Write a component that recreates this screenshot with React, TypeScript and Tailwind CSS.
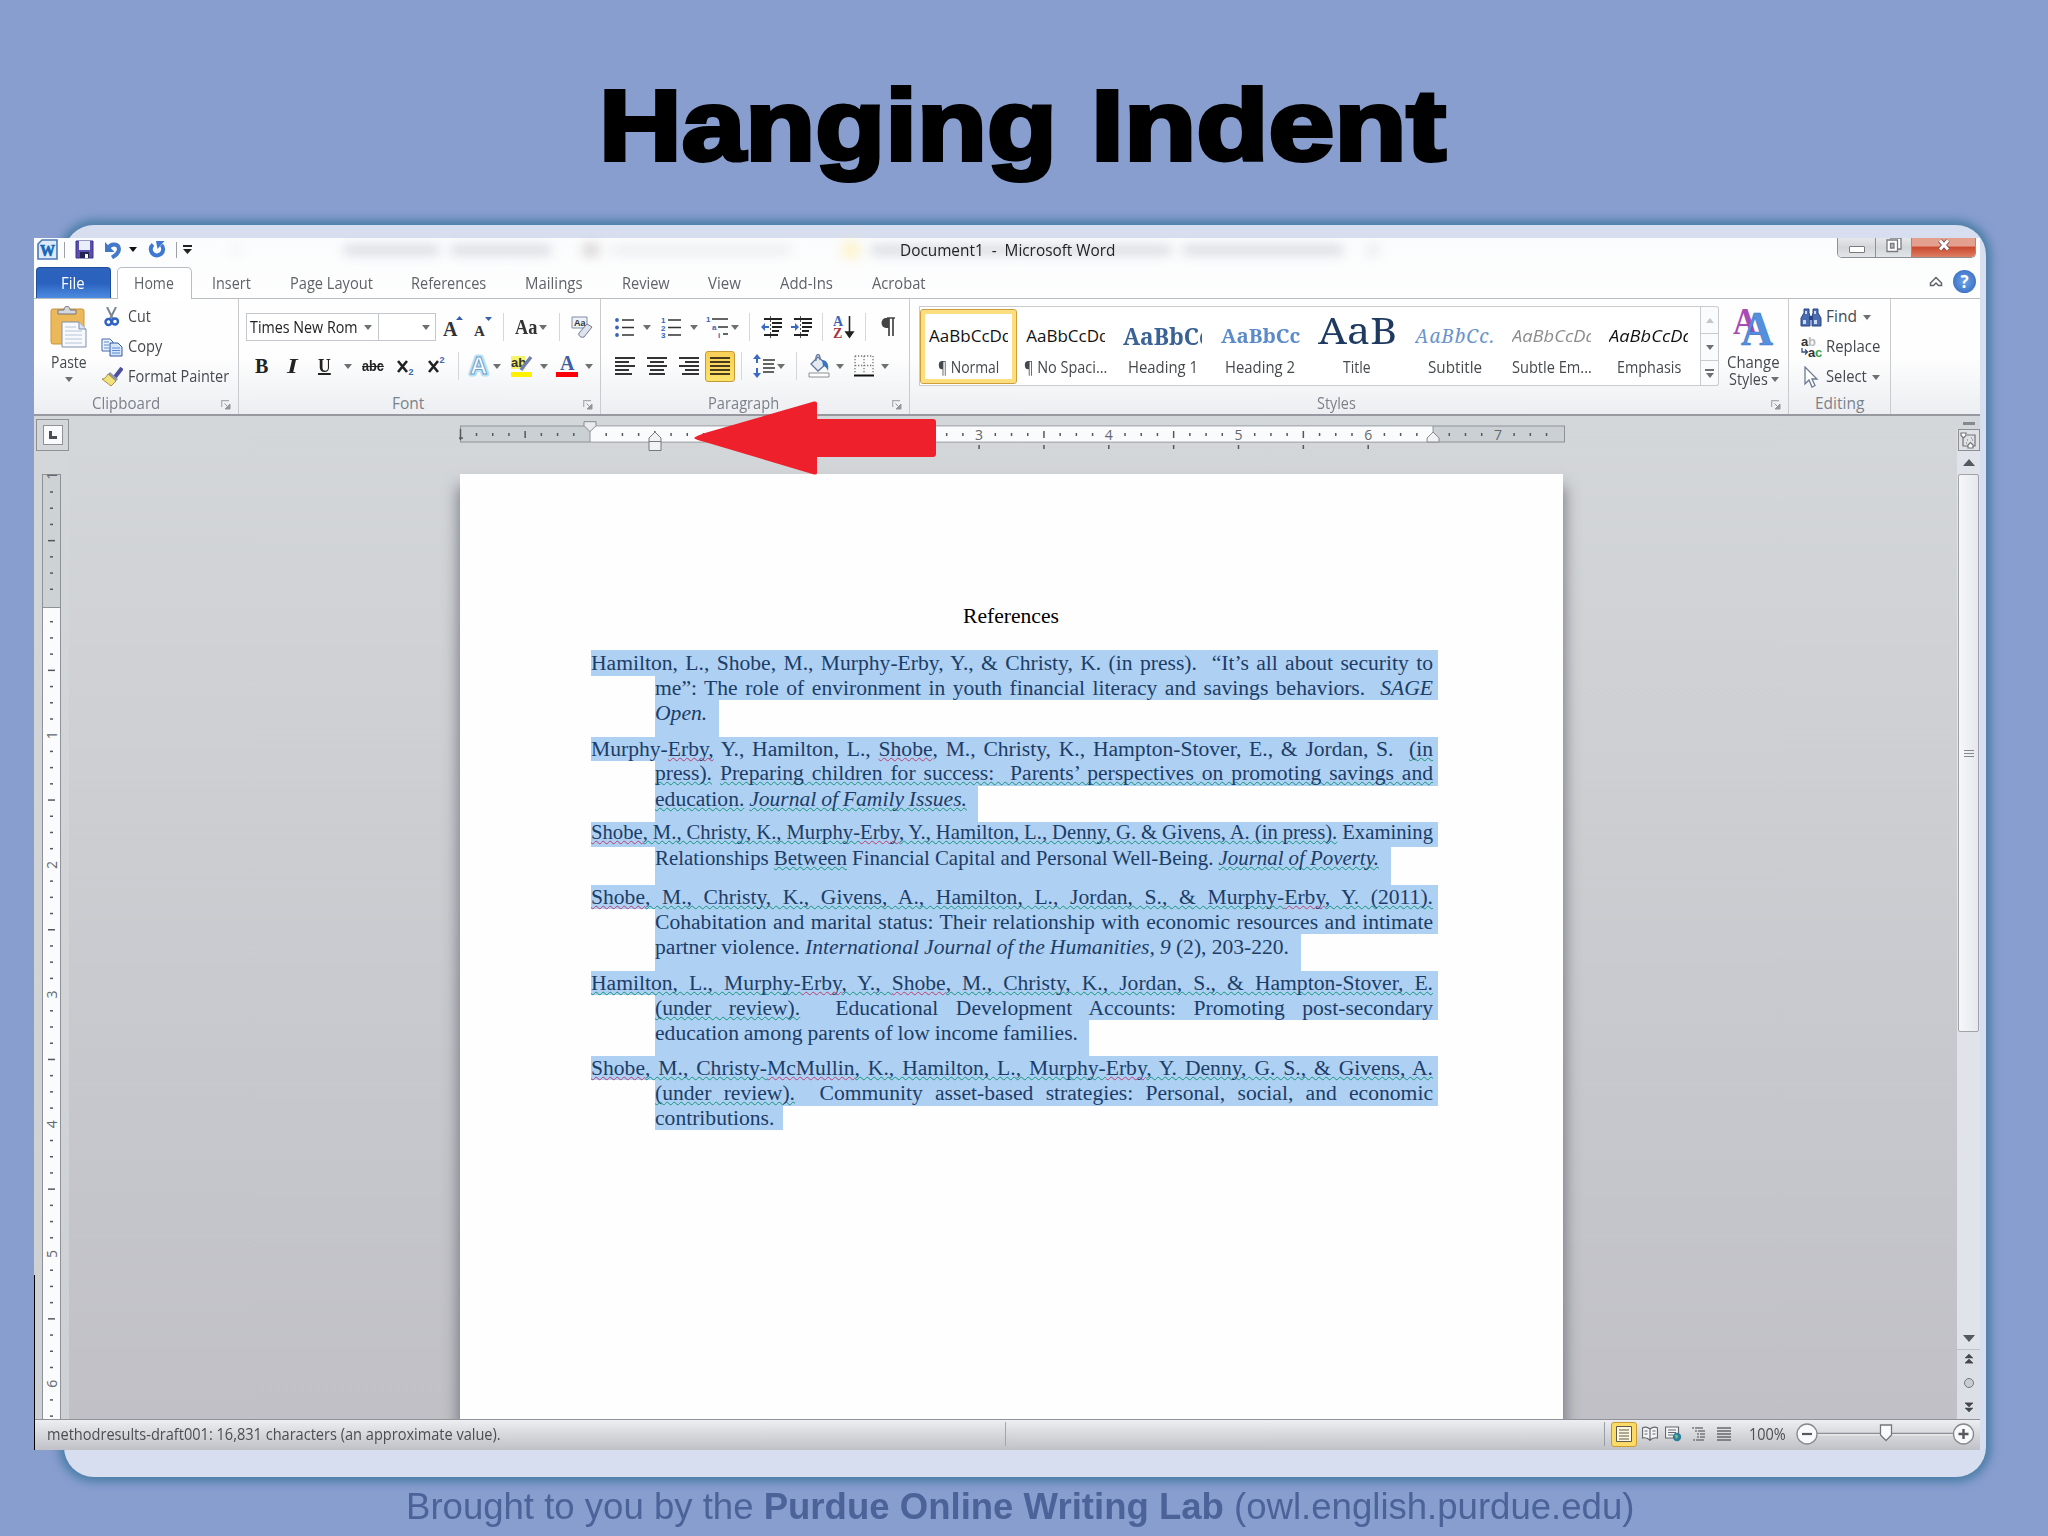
import { useLayoutEffect, useRef, type ReactNode } from "react";
import clsx from "clsx";

/* Squeezes or stretches one line of text to a given width */
function Fit({ w, className, children }: { w: number; className?: string; children: ReactNode }) {
  const ref = useRef<HTMLSpanElement>(null);
  useLayoutEffect(() => {
    const el = ref.current;
    if (el) el.style.transform = `scaleX(${w / el.offsetWidth})`;
  }, [w]);
  return (
    <span className={clsx("block shrink-0", className)} style={{ width: w }}>
      <span ref={ref} className="inline-block origin-left whitespace-pre">
        {children}
      </span>
    </span>
  );
}

/* Spreads the words of a document line over a given width */
function Justified({ w, children }: { w: number; children: ReactNode }) {
  const ref = useRef<HTMLSpanElement>(null);
  useLayoutEffect(() => {
    const el = ref.current;
    if (!el) return;
    el.style.wordSpacing = "0px";
    const spaces = (el.textContent ?? "").split(" ").length - 1;
    if (spaces > 0) {
      const extra = (w - el.getBoundingClientRect().width) / spaces;
      el.style.wordSpacing = `${extra}px`;
    }
  }, [w]);
  return (
    <span ref={ref} className="inline-block whitespace-pre">
      {children}
    </span>
  );
}

const wave = "underline decoration-wavy decoration-[1.2px] underline-offset-1 [text-decoration-skip-ink:none]";
const G = ({ children }: { children: ReactNode }) => (
  <span className={clsx(wave, "[text-decoration-color:#12957a]")}>{children}</span>
);
const R = ({ children }: { children: ReactNode }) => (
  <span className={clsx(wave, "[text-decoration-color:#b83f70]")}>{children}</span>
);

function Caret({ className, color = "#6d6f73" }: { className?: string; color?: string }) {
  return (
    <svg width="8" height="5" viewBox="0 0 8 5" className={clsx("shrink-0", className)}>
      <path d="M0 0h8L4 5z" fill={color} />
    </svg>
  );
}

const Sep = ({ className }: { className?: string }) => (
  <div className={clsx("w-px h-7 shrink-0 bg-[#d5d7da]", className)} />
);

function Launcher() {
  return (
    <svg width="10" height="10" viewBox="0 0 10 10">
      <path d="M.7 7V.7H8" fill="none" stroke="#a9abb0" strokeWidth="1.2" />
      <path d="M3.5 3.5L8 8M9 4v5H4z" fill="#94969b" stroke="#94969b" />
    </svg>
  );
}

function Group({
  className,
  label,
  labelW,
  labelClass,
  launcher = true,
  children,
}: {
  className: string;
  label: string;
  labelW: number;
  labelClass?: string;
  launcher?: boolean;
  children: ReactNode;
}) {
  return (
    <div className={clsx("flex flex-col h-full shrink-0 border-r border-[#c9cbcf]", className)}>
      <div className="h-[93px]">{children}</div>
      <div className="flex items-center h-[22px] text-[#7b818b] leading-[22px]">
        <div className={clsx("flex-1 flex justify-center", labelClass)}>
          <Fit w={labelW}>{label}</Fit>
        </div>
        {launcher && (
          <div className="w-[17px] pt-1">
            <Launcher />
          </div>
        )}
      </div>
    </div>
  );
}

/* ---- title bar ---- */

function TitleBar() {
  return (
    <div className="relative flex items-start h-[29px]">
      <div className="absolute left-[200px] top-0 flex items-center h-6 blur-[6px] opacity-45">
        <div className="w-1 h-3 bg-gray-300" />
        <div className="ml-[106px] w-[95px] h-2 bg-gray-400" />
        <div className="ml-3 w-[100px] h-2 bg-gray-400" />
        <div className="ml-8 w-4 h-3 bg-stone-400" />
        <div className="ml-3 w-[180px] h-2 bg-gray-300" />
        <div className="ml-[52px] w-4 h-4 bg-amber-200" />
        <div className="ml-3 w-[300px] h-2 bg-gray-400" />
        <div className="ml-3 w-[160px] h-2 bg-gray-400" />
        <div className="ml-6 w-3 h-3 bg-gray-300" />
      </div>
      <div className="relative flex items-center h-[23px]">
        <svg width="21" height="21" viewBox="0 0 21 21" className="ml-[3px]">
          <path d="M1 5l4-4h15v19H1z" fill="#dceafa" stroke="#4a78b8" strokeWidth="1.6" />
          <text x="3" y="16.500" fontFamily="Liberation Serif" fontWeight="700" fontSize="16" fill="#1767b5" stroke="#1767b5" strokeWidth=".7" textLength="15" lengthAdjust="spacingAndGlyphs">
            W
          </text>
        </svg>
        <div className="ml-[6px] w-px h-4 bg-[#9da0a5]" />
        <svg width="19" height="19" viewBox="0 0 19 19" className="ml-[10px]">
          <path d="M1 1h17v17H1z" fill="#5a4fb0" stroke="#38338a" />
          <path d="M4 1h11v9H4z" fill="#e8f1fb" />
          <path d="M5 12h9v6H5z" fill="#23234f" />
          <path d="M10 14h3v4h-3z" fill="#fff" />
        </svg>
        <svg width="18" height="18" viewBox="0 0 18 18" className="ml-[10px]">
          <path d="M1 1v10h9.500z" fill="#3f78c9" />
          <path d="M4 7.500c3-6 11-5 11 .5 0 4-3 6-7 8.500" fill="none" stroke="#4379cb" strokeWidth="4" />
        </svg>
        <Caret className="ml-[7px]" color="#111" />
        <svg width="18" height="18" viewBox="0 0 18 18" className="ml-[11px]">
          <path d="M5 3.500a6.200 6.200 0 1 0 8.500.5" fill="none" stroke="#3f78d2" strokeWidth="4" />
          <path d="M8 0h8.500L9.500 8z" fill="#3f78d2" />
        </svg>
        <div className="ml-[10px] w-px h-4 bg-[#9da0a5]" />
        <svg width="9" height="9" viewBox="0 0 9 9" className="ml-[6px]">
          <path d="M0 0h9v2H0zM0 4h9L4.500 9z" fill="#222" />
        </svg>
      </div>
      <Fit w={215} className="relative ml-[708px] h-[24px] leading-[24px] text-[16px] text-[#222]">
        Document1  -  Microsoft Word
      </Fit>
      <div className="relative ml-auto mr-1 flex h-5 w-[139px] rounded-b-[5px] border border-t-0 border-[#8d9196] overflow-hidden">
        <div className="w-[38px] flex items-center justify-center bg-linear-to-b from-[#e6e7e9] via-[#d3d6d9] to-[#e3e6e8] border-r border-[#8d9196]">
          <div className="w-4 h-[7px] mt-1 bg-white border border-[#777a80] rounded-[1px]" />
        </div>
        <div className="w-[36px] flex justify-center bg-linear-to-b from-[#e6e7e9] via-[#d3d6d9] to-[#e3e6e8] border-r border-[#8d9196]">
          <svg width="18" height="17" viewBox="0 0 18 17" className="-mt-px">
            <path d="M5 1h11v11h-3" fill="#fff" stroke="#777a80" strokeWidth="1.300" />
            <path d="M2 3h10.500v11.500H2z" fill="#fff" stroke="#777a80" strokeWidth="1.300" />
            <path d="M5.500 6.500H9V11H5.500z" fill="#bbb" stroke="#777a80" strokeWidth="1.300" />
          </svg>
        </div>
        <div className="flex-1 flex justify-center bg-linear-to-b from-[#e3a08f] from-40% via-[#cb4a2f] via-50% to-[#dd7d63]">
          <svg width="16" height="15" viewBox="0 0 16 15">
            <path d="M4 2.500l8 9M12 2.500l-8 9" stroke="#7b4a48" strokeWidth="4.800" />
            <path d="M4 2.500l8 9M12 2.500l-8 9" stroke="#fff" strokeWidth="3" />
          </svg>
        </div>
      </div>
    </div>
  );
}

const tabs = [
  { name: "Insert", w: 39 },
  { name: "Page Layout", w: 83 },
  { name: "References", w: 75 },
  { name: "Mailings", w: 58 },
  { name: "Review", w: 48 },
  { name: "View", w: 33 },
  { name: "Add-Ins", w: 53 },
  { name: "Acrobat", w: 54 },
];

function TabRow() {
  return (
    <div className="relative flex h-8 border-b border-[#b9bcc1] text-[#5f6368] leading-[32px]">
      <div className="ml-[2px] w-[75px] rounded-t-[4px] border border-b-0 border-[#1e4f9e] bg-linear-to-b from-[#2d63bd] via-[#2a62bf] to-[#4d8be0] text-white flex justify-center">
        <Fit w={24} className="mr-[2px] leading-[30px]">File</Fit>
      </div>
      <div className="ml-[6px] h-8 w-[75px] rounded-t-[5px] border border-b-0 border-[#b9bcc1] bg-white flex justify-center">
        <Fit w={40} className="mr-[1px] leading-[30px]">Home</Fit>
      </div>
      <div className="ml-[20px] flex gap-[38.7px]">
        {tabs.map((t) => (
          <Fit key={t.name} w={t.w}>
            {t.name}
          </Fit>
        ))}
      </div>
      <svg width="14" height="12" viewBox="0 0 14 12" className="ml-auto mt-[9px]">
        <path d="M1.500 7L7 1.500 12.500 7v2.500H9.500L7 7 4.500 9.500h-3z" fill="#fff" stroke="#606368" strokeWidth="1.500" />
      </svg>
      <div className="ml-[10px] mr-[4px] mt-[3px] size-[23px] rounded-full bg-radial from-[#6fa4e8] to-[#2c63b8] text-white font-bold text-[17px] leading-[23px] text-center">
        ?
      </div>
    </div>
  );
}

/* ---- ribbon groups ---- */

function Clipboard() {
  return (
    <Group className="w-[205px]" label="Clipboard" labelW={68} labelClass="pr-[4px]">
      <div className="flex">
        <div className="ml-4 w-[37px] flex flex-col items-center">
          <svg width="37" height="42" viewBox="0 0 37 42" className="mt-[7px]">
            <rect x="1" y="3" width="33" height="35" rx="2" fill="#ebb85a" stroke="#c9953c" />
            <path d="M8 8V4h6c0-5 6-5 6 0h6v4z" fill="#d4d7dc" stroke="#74777c" />
            <path d="M12 16h17l7 7v18H12z" fill="#f7f9fd" stroke="#7f8fae" />
            <path d="M29 16v7h7" fill="#d8e2f2" stroke="#7f8fae" />
            <path d="M15 21h11M15 25h17M15 29h17M15 33h17M15 37h17" stroke="#b6c3da" />
          </svg>
          <Fit w={36} className="mt-[3px] leading-[22px]">
            Paste
          </Fit>
          <Caret className="mt-[4px]" />
        </div>
        <div className="ml-[14px] pt-[3px]">
          <div className="flex items-center h-[30px]">
            <svg width="22" height="20" viewBox="0 0 22 20">
              <path d="M6 0l6 12M15 0L9 12" stroke="#7d8694" strokeWidth="2" />
              <circle cx="7.500" cy="15" r="3" fill="none" stroke="#2f62c4" strokeWidth="2.400" />
              <circle cx="14" cy="14.500" r="3" fill="none" stroke="#2f62c4" strokeWidth="2.400" />
            </svg>
            <Fit w={23} className="ml-[5px]">Cut</Fit>
          </div>
          <div className="flex items-center h-[30px]">
            <svg width="22" height="19" viewBox="0 0 22 19">
              <path d="M1 1h8l3 3v9H1z" fill="#eaf2fd" stroke="#4569a8" />
              <path d="M9 5h8l4 4v9H9z" fill="#d5e5fa" stroke="#32589d" />
              <path d="M3 4h5M3 7h5M3 10h5M11 10h8M11 12.500h8M11 15h8" stroke="#5f8bd0" />
            </svg>
            <Fit w={34} className="ml-[5px]">Copy</Fit>
          </div>
          <div className="flex items-center h-[30px]">
            <svg width="22" height="20" viewBox="0 0 22 20">
              <path d="M21 1l-7 9" stroke="#4b4f9e" strokeWidth="4" />
              <path d="M9 5l8 7-2 2-8-7z" fill="#8e96ae" />
              <path d="M7 7l8 7-5 5L1 12c3 0 4-2 6-5z" fill="#f1e27d" stroke="#a5913d" />
            </svg>
            <Fit w={101} className="ml-[5px]">Format Painter</Fit>
          </div>
        </div>
      </div>
    </Group>
  );
}

function FontGroup() {
  return (
    <Group className="w-[362px]" label="Font" labelW={32} labelClass="pr-[6px]">
      <div className="flex items-center mt-[14px] h-7 pl-[7px]">
        <div className="flex h-7 border border-[#c4c7cc] bg-white leading-[27px] text-[#222]">
          <div className="flex items-center w-[132px] border-r border-[#c4c7cc]">
            <Fit w={108} className="ml-[3px]">Times New Rom</Fit>
            <Caret className="ml-[6px]" />
          </div>
          <div className="flex items-center w-[56px] pl-[43px]">
            <Caret />
          </div>
        </div>
        <svg width="20" height="22" viewBox="0 0 20 22" className="ml-[7px]">
          <text x="0" y="20" fontFamily="Liberation Serif" fontWeight="700" fontSize="20" fill="#333">A</text>
          <path d="M13 4h7l-3.500-4z" fill="#3560ad" />
        </svg>
        <svg width="18" height="22" viewBox="0 0 18 22" className="ml-[11px]">
          <text x="0" y="20" fontFamily="Liberation Serif" fontWeight="700" fontSize="15" fill="#333">A</text>
          <path d="M11 1h7l-3.500 4z" fill="#3560ad" />
        </svg>
        <Sep className="ml-[11px]" />
        <Fit w={22} className="ml-[11px] text-[20px] leading-[28px] font-bold text-[#333] font-['Liberation_Serif',serif]">Aa</Fit>
        <Caret className="ml-[2px]" />
        <Sep className="ml-[12px]" />
        <svg width="22" height="22" viewBox="0 0 22 22" className="ml-[11px]">
          <path d="M1 1h15v11H1z" fill="#eef1f6" stroke="#7f8ca8" />
          <text x="3" y="10" fontFamily="Liberation Sans" fontWeight="700" fontSize="9" fill="#333">Aa</text>
          <path d="M8 17l8-9 5 3-8 10c-3 1-6-1-5-4z" fill="#dfe3ec" stroke="#6e7891" />
        </svg>
      </div>
      <div className="flex items-center mt-2 h-[34px] pl-[16px] text-[#222]">
        <Fit w={13} className="font-bold text-[20px] font-['Liberation_Serif',serif]">B</Fit>
        <Fit w={11} className="ml-[19px] italic font-bold text-[20px] font-['Liberation_Serif',serif]">I</Fit>
        <Fit w={13} className="ml-[20px] font-bold text-[19px] font-['Liberation_Serif',serif]">
          <span className="underline decoration-2">U</span>
        </Fit>
        <Caret className="ml-[13px]" />
        <Fit w={22} className="ml-[10px] font-bold text-[15px] font-['Liberation_Sans',sans-serif]">
          <span className="line-through">abc</span>
        </Fit>
        <svg width="17" height="22" viewBox="0 0 17 22" className="ml-[13px]">
          <path d="M1 6l9 11M10 6L1 17" stroke="#222" strokeWidth="2.600" />
          <text x="11.500" y="20" fontFamily="Liberation Sans" fontWeight="700" fontSize="9" fill="#3865b8">2</text>
        </svg>
        <svg width="17" height="22" viewBox="0 0 17 22" className="ml-[14px]">
          <path d="M1 6l9 11M10 6L1 17" stroke="#222" strokeWidth="2.600" />
          <text x="11.500" y="8" fontFamily="Liberation Sans" fontWeight="700" fontSize="9" fill="#3865b8">2</text>
        </svg>
        <Sep className="ml-[13px]" />
        <svg width="20" height="22" viewBox="0 0 20 22" className="ml-[10px] overflow-visible">
          <text x="1" y="19" fontFamily="Liberation Sans" fontWeight="700" fontSize="24" fill="#9fd0ee" stroke="#b5e2f7" strokeWidth="5" strokeLinejoin="round">A</text>
          <text x="1" y="19" fontFamily="Liberation Sans" fontWeight="700" fontSize="24" fill="#fff" stroke="#6f9fc8" strokeWidth="1">A</text>
        </svg>
        <Caret className="ml-[4px]" />
        <svg width="22" height="24" viewBox="0 0 22 24" className="ml-[10px]">
          <path d="M0 2h14v13H0z" fill="#f4f36a" />
          <text x="0" y="13" fontFamily="Liberation Sans" fontWeight="700" fontSize="13" fill="#333">ab</text>
          <path d="M20 3l-8 10-2 3" stroke="#6f7fae" strokeWidth="3.500" fill="none" />
          <path d="M0 18h21v5H0z" fill="#fff200" />
        </svg>
        <Caret className="ml-[7px]" />
        <svg width="22" height="24" viewBox="0 0 22 24" className="ml-[8px]">
          <text x="4" y="16" fontFamily="Liberation Serif" fontWeight="700" fontSize="20" fill="#3f5fa3">A</text>
          <path d="M0 18h22v5H0z" fill="#fb0007" />
        </svg>
        <Caret className="ml-[7px]" />
      </div>
    </Group>
  );
}

function IndentIcon({ right }: { right?: boolean }) {
  return (
    <svg width="22" height="22" viewBox="0 0 22 22" className="shrink-0">
      <path d="M3 3h18M11 7h10M11 11h10M11 15h7M3 19h14" stroke="#222" strokeWidth="2.200" />
      <path d="M9.500 0v22" stroke="#555" strokeDasharray="2 2" />
      <path d={right ? "M8 11L4 7v3H0v2h4v3z" : "M0 11l4-4v3h4v2H4v3z"} fill="#3a6ac4" />
    </svg>
  );
}

function Paragraph() {
  return (
    <Group className="w-[309px]" label="Paragraph" labelW={71} labelClass="pr-[7px]">
      <div className="flex items-center mt-[14px] h-7 pl-[14px]">
        <svg width="20" height="20" viewBox="0 0 20 20">
          <path d="M7 3h12M7 10.500h12M7 18h12" stroke="#333" strokeWidth="1.600" />
          <circle cx="2" cy="3" r="1.900" fill="#3a63b5" />
          <circle cx="2" cy="10.500" r="1.900" fill="#3a63b5" />
          <circle cx="2" cy="18" r="1.900" fill="#3a63b5" />
        </svg>
        <Caret className="ml-[8px]" />
        <svg width="20" height="22" viewBox="0 0 20 22" className="ml-[10px]">
          <path d="M7 4h13M7 11.500h13M7 19h13" stroke="#333" strokeWidth="1.600" />
          <g fontFamily="Liberation Sans" fontWeight="700" fontSize="8" fill="#3a63b5">
            <text x="0" y="7">1</text>
            <text x="0" y="14.500">2</text>
            <text x="0" y="22">3</text>
          </g>
        </svg>
        <Caret className="ml-[9px]" />
        <svg width="23" height="24" viewBox="0 0 23 24" className="ml-[8px]">
          <path d="M6 4h16M12 12h10M17 19h5" stroke="#333" strokeWidth="1.600" />
          <g fontFamily="Liberation Sans" fontWeight="700" fontSize="8" fill="#3a63b5">
            <text x="0" y="7">1</text>
            <text x="6" y="15">a</text>
            <text x="12" y="23">i</text>
          </g>
        </svg>
        <Caret className="ml-[2px]" />
        <Sep className="ml-[10px]" />
        <div className="ml-[11px] flex gap-2">
          <IndentIcon />
          <IndentIcon right />
        </div>
        <Sep className="ml-[9px]" />
        <svg width="22" height="24" viewBox="0 0 22 24" className="ml-[10px]">
          <g fontFamily="Liberation Serif" fontWeight="700" fontSize="14">
            <text x="0" y="11" fill="#3a63b5">A</text>
            <text x="0" y="23" fill="#a3343c">Z</text>
          </g>
          <path d="M16.500 1v20M13 17l3.500 5 3.500-5z" stroke="#222" strokeWidth="1.600" fill="#222" />
        </svg>
        <Sep className="ml-[10px]" />
        <svg width="14" height="20" viewBox="0 0 14 20" className="ml-[15px]">
          <path d="M6 1h8M8 1v18M12 1v18" stroke="#444" strokeWidth="1.700" />
          <path d="M8 1H5a4.500 5 0 0 0 0 10h3z" fill="#444" />
        </svg>
      </div>
      <div className="flex items-center mt-2 h-[34px] pl-[14px]">
        <svg width="20" height="18" viewBox="0 0 20 18">
          <path d="M0 1h20M0 5h14M0 9h20M0 13h14M0 17h17" stroke="#333" strokeWidth="1.800" />
        </svg>
        <svg width="20" height="18" viewBox="0 0 20 18" className="ml-[12px]">
          <path d="M0 1h20M3 5h14M0 9h20M3 13h14M2 17h16" stroke="#333" strokeWidth="1.800" />
        </svg>
        <svg width="20" height="18" viewBox="0 0 20 18" className="ml-[12px]">
          <path d="M0 1h20M6 5h14M0 9h20M6 13h14M3 17h17" stroke="#333" strokeWidth="1.800" />
        </svg>
        <div className="ml-[6px] w-[30px] h-[31px] shrink-0 rounded-[3px] border border-[#c59a35] bg-linear-to-b from-[#f9cf55] to-[#fbe26b] flex items-center justify-center">
          <svg width="20" height="18" viewBox="0 0 20 18">
            <path d="M0 1h20M0 5h20M0 9h20M0 13h20M0 17h20" stroke="#4a3a1c" strokeWidth="2" />
          </svg>
        </div>
        <Sep className="ml-[6px]" />
        <svg width="22" height="24" viewBox="0 0 22 24" className="ml-[11px]">
          <path d="M10 6h12M10 10h11M10 14h12M10 18h11" stroke="#333" strokeWidth="1.600" />
          <path d="M4 0L0 5h3v4h2V5h3zM4 24l-4-5h3v-5h2v5h3z" fill="#3a6ac4" />
        </svg>
        <Caret className="ml-[2px]" />
        <Sep className="ml-[11px]" />
        <svg width="22" height="24" viewBox="0 0 22 24" className="ml-[11px]">
          <path d="M3 10l7-7 8 7-8 7z" fill="#e5eaf2" stroke="#63789e" strokeWidth="1.300" />
          <path d="M8 7c-1-9 5-8 4-1" fill="none" stroke="#63789e" strokeWidth="1.300" />
          <path d="M14 6c5 0 7 4 6 11-1-3-3-5-5-5z" fill="#3a74c4" />
          <path d="M1 19h20v4H1z" fill="#fff" stroke="#8c8f94" />
        </svg>
        <Caret className="ml-[6px]" />
        <svg width="20" height="22" viewBox="0 0 20 22" className="ml-[10px]">
          <path d="M1 1h18M1 10.500h18M1 1v18M10 1v18M19 1v18" stroke="#777" strokeWidth="1.300" strokeDasharray="1.300 1.700" />
          <path d="M0 20.500h20" stroke="#111" strokeWidth="2" />
        </svg>
        <Caret className="ml-[7px]" />
      </div>
    </Group>
  );
}

const styleItems = [
  { name: "¶ Normal", w: 61, text: "AaBbCcDd", look: "text-[17px] text-[#111]", tw: 83 },
  { name: "¶ No Spaci...", w: 83, text: "AaBbCcDd", look: "text-[17px] text-[#111]", tw: 83 },
  { name: "Heading 1", w: 70, text: "AaBbCc", look: "text-[23px] font-bold text-[#3b6296] font-['Noto_Serif','DejaVu_Serif_Condensed','Liberation_Serif',serif]", tw: 88 },
  { name: "Heading 2", w: 70, text: "AaBbCc", look: "text-[20px] font-bold text-[#5b8bc8] font-['Noto_Serif','DejaVu_Serif_Condensed','Liberation_Serif',serif]", tw: 79 },
  { name: "Title", w: 28, text: "AaB", look: "text-[37px] text-[#1f3a60] font-['Noto_Serif','DejaVu_Serif_Condensed','Liberation_Serif',serif]", tw: 79 },
  { name: "Subtitle", w: 54, text: "AaBbCc.", look: "text-[19px] italic text-[#6a94cb] tracking-wider font-['Noto_Serif','DejaVu_Serif_Condensed','Liberation_Serif',serif]", tw: 80 },
  { name: "Subtle Em...", w: 80, text: "AaBbCcDd", look: "text-[17px] italic text-[#8c8c8c]", tw: 84 },
  { name: "Emphasis", w: 64, text: "AaBbCcDd", look: "text-[17px] italic text-[#111]", tw: 84 },
];

function StylesGroup() {
  return (
    <Group className="w-[879px]" label="Styles" labelW={39} labelClass="pr-[9px]">
      <div className="flex">
        <div className="flex mt-[7px] ml-[9px] h-[80px] w-[782px] shrink-0 border border-[#c9cbcf] bg-white">
          {styleItems.map((s, i) => (
            <div
              key={s.name}
              className={clsx(
                "mt-[2px] h-[75px] w-[97.2px] shrink-0 flex flex-col items-center rounded-[3px] border",
                i === 0
                  ? "border-[#cf9f3d] bg-white shadow-[inset_0_0_0_4px_#fbdf7e]"
                  : "border-transparent",
              )}
            >
              <div className="mt-[8px] h-[36px] w-[79px] overflow-hidden">
                <Fit w={s.tw} className={clsx(i === 4 ? "leading-[24px]" : "leading-[36px]", s.look)}>
                  {s.text}
                </Fit>
              </div>
              <Fit w={s.w} className="mt-[2px] leading-[22px]">
                {s.name}
              </Fit>
            </div>
          ))}
        </div>
        <div className="mt-[7px] w-[18px] h-[80px] shrink-0 border border-l-0 border-[#c9cbcf] bg-[#fafbfc] rounded-r-[3px] flex flex-col">
          <div className="h-[27px] flex items-center justify-center border-b border-[#c9cbcf]">
            <Caret className="rotate-180" color="#c4c6ca" />
          </div>
          <div className="h-[27px] flex items-center justify-center border-b border-[#c9cbcf]">
            <Caret />
          </div>
          <div className="flex-1 flex flex-col items-center justify-center gap-[2px]">
            <div className="w-[9px] h-[2px] bg-[#6d6f73]" />
            <Caret />
          </div>
        </div>
        <div className="ml-[7px] w-[55px] flex flex-col items-center">
          <svg width="41" height="42" viewBox="0 0 41 42" className="mt-[6px]">
            <g fontFamily="Liberation Serif" fontWeight="700">
              <text x="0" y="29" fontSize="38" fill="#a94bb5" textLength="24" lengthAdjust="spacingAndGlyphs">A</text>
              <text x="8" y="40" fontSize="49" fill="#5590de" stroke="#3a74c6" strokeWidth=".6" textLength="32" lengthAdjust="spacingAndGlyphs">A</text>
            </g>
          </svg>
          <Fit w={53} className="mt-[4px] leading-[22px]">Change</Fit>
          <div className="flex items-center h-[17px] -mt-[2px]">
            <Fit w={39}>Styles</Fit>
            <Caret className="ml-[3px]" />
          </div>
        </div>
      </div>
    </Group>
  );
}

function Editing() {
  return (
    <Group className="w-[102px]" label="Editing" labelW={49} launcher={false}>
      <div className="pt-[3px] pl-[11px]">
        <div className="flex items-center h-[30px]">
          <svg width="22" height="19" viewBox="0 0 22 19">
            <path d="M4 1h5v4l1 3v10H1v-8l3-5zM13 1h5v4l3 5v8h-9V8l1-3z" fill="#4a6cb0" stroke="#2b4583" />
            <path d="M3 12h3v4H3zM14 12h3v4h-3zM5 3h2v3H5zM14 3h2v3h-2z" fill="#c9daf5" />
            <path d="M9 8h4v4H9z" fill="#2b4583" />
          </svg>
          <Fit w={31} className="ml-[4px]">Find</Fit>
          <Caret className="ml-[6px]" />
        </div>
        <div className="flex items-center h-[30px]">
          <svg width="22" height="22" viewBox="0 0 22 22">
            <g fontFamily="Liberation Sans" fontWeight="700" fontSize="13">
              <text x="1" y="10" fill="#333">a</text>
              <text x="8" y="10" fill="#bbb">b</text>
              <text x="8" y="21" fill="#333">a</text>
              <text x="15" y="21" fill="#34a042">c</text>
            </g>
            <path d="M2 12v4h5M5 13.500L7.500 16 5 18.500" fill="none" stroke="#3a4f7e" strokeWidth="1.300" />
          </svg>
          <Fit w={54} className="ml-[4px]">Replace</Fit>
        </div>
        <div className="flex items-center h-[30px]">
          <svg width="22" height="22" viewBox="0 0 22 22">
            <path d="M5 1v17l4-4 3 7 3-1.500-3-6.500h5z" fill="#fff" stroke="#6d7a93" strokeWidth="1.300" />
          </svg>
          <Fit w={41} className="ml-[4px]">Select</Fit>
          <Caret className="ml-[5px]" />
        </div>
      </div>
    </Group>
  );
}

/* ---- rulers ---- */

const INCH = 129.7;

function HorizontalRuler() {
  const zero = 131;
  const marks = [];
  for (let i = -7; i <= 59; i++) {
    if (i === 0 || i === 52) continue;
    const x = zero + (i * INCH) / 8;
    if (i % 8 === 0) {
      marks.push(
        <text key={i} x={x} y="18.500" textAnchor="middle" fontFamily="Open Sans" fontSize="14" fill="#64676c">
          {i / 8}
        </text>,
      );
    } else {
      const tall = i % 4 === 0;
      marks.push(<path key={i} d={`M${x} ${tall ? 10 : 12}v${tall ? 7 : 3}`} stroke="#55585d" strokeWidth="1.500" />);
    }
  }
  const stops = [6, 7, 8, 9, 10, 11, 12].map((n) => zero + (n * INCH) / 2);
  return (
    <svg width="1108" height="32" viewBox="0 0 1108 32" className="block">
      <rect x="1.500" y="5" width="1104" height="16" fill="#cbd0d5" stroke="#8e9297" />
      <rect x={zero} y="5.500" width={INCH * 6.5} height="15" fill="#fafbfc" />
      <path d={`M${zero} 5v16M${zero + INCH * 6.5} 5v16`} stroke="#8e9297" />
      <path d="M1.500 8v11M-1 17h5" stroke="#55585d" strokeWidth="1.500" />
      {marks}
      {stops.map((x) => (
        <path key={x} d={`M${x} 24v4`} stroke="#55585d" strokeWidth="1.500" />
      ))}
      <path d={`M${zero - 6} .7h12v4l-6 6-6-6z`} fill="#e9ebee" stroke="#85888d" />
      <path d={`M${zero + 65 - 6} 29.500V17l6-6 6 6v12.500zM${zero + 59} 20.500h12`} fill="#f1f2f4" stroke="#75787d" />
      <path d={`M${zero + INCH * 6.5 - 6} 21v-4l6-6 6 6v4z`} fill="#f1f2f4" stroke="#85888d" />
    </svg>
  );
}

function VerticalRuler() {
  const zero = 131.5;
  const marks = [];
  for (let i = -8; i <= 50; i++) {
    if (i === 0) continue;
    const y = zero + (i * INCH) / 8;
    if (i % 8 === 0) {
      marks.push(
        <text key={i} transform={`translate(14.500 ${y}) rotate(-90)`} textAnchor="middle" fontFamily="Open Sans" fontSize="14" fill="#64676c">
          {Math.abs(i / 8)}
        </text>,
      );
    } else {
      const tall = i % 4 === 0;
      marks.push(<path key={i} d={`M${tall ? 6 : 8} ${y}h${tall ? 7 : 3}`} stroke="#55585d" strokeWidth="1.500" />);
    }
  }
  return (
    <svg width="20" height="945" viewBox="0 0 20 945" className="block">
      <rect x=".5" y=".5" width="18" height="960" fill="#fafbfc" stroke="#8e9297" />
      <rect x=".5" y=".5" width="18" height="133" fill="#cdd2d5" stroke="#8e9297" />
      {marks}
    </svg>
  );
}

/* ---- document ---- */

type Row = { h: string; leading: string; size?: string; end?: number; body: ReactNode };

const paragraphs: Row[][] = [
  [
    { h: "h-[26px]", leading: "leading-[27px]", body: <>Hamilton, L., Shobe, M., Murphy-Erby, Y., &amp; Christy, K. (in press).  “It’s all about security to</> },
    { h: "h-[24px]", leading: "leading-[24px]", body: <>me”: The role of environment in youth financial literacy and savings behaviors.  <i>SAGE</i></> },
    { h: "h-[37px]", leading: "leading-[27px]", end: 51, body: <i>Open.</i> },
  ],
  [
    { h: "h-[24px]", leading: "leading-[24px]", body: <>Murphy-<R>Erby,</R> Y., Hamilton, L., <R>Shobe</R>, M., Christy, K., Hampton-Stover, E., &amp; Jordan, S.  <G>(in</G></> },
    { h: "h-[25px]", leading: "leading-[24px]", body: <><G>press).</G> <G>Preparing children for success:  Parents’ perspectives on promoting savings and</G></> },
    { h: "h-[36px]", leading: "leading-[26px]", end: 312, body: <><G>education.</G> <G><i>Journal of Family Issues.</i></G></> },
  ],
  [
    { h: "h-[25px]", leading: "leading-[20px]", size: "text-[20.7px]", body: <><R>Shobe</R><G>, M., Christy, K., Murphy-</G><R>Erby</R><G>, Y., Hamilton, L., Denny, G. &amp; Givens, A. (in press).</G> Examining</> },
    { h: "h-[38px]", leading: "leading-[23px]", size: "text-[20.9px]", end: 724, body: <>Relationships <G>Between</G> Financial Capital and Personal Well-Being. <G><i>Journal of Poverty.</i></G></> },
  ],
  [
    { h: "h-[24px]", leading: "leading-[25px]", body: <><R>Shobe</R><G>, M., Christy, K., Givens, A., Hamilton, L., Jordan, S., &amp; Murphy-</G><R>Erby</R><G>, Y. (2011).</G></> },
    { h: "h-[25px]", leading: "leading-[26px]", body: <>Cohabitation and marital status: Their relationship with economic resources and intimate</> },
    { h: "h-[37px]", leading: "leading-[27px]", end: 634, body: <>partner violence. <i>International Journal of the Humanities, 9</i> (2), 203-220.</> },
  ],
  [
    { h: "h-[24px]", leading: "leading-[24px]", body: <><G>Hamilton, L., Murphy-</G><R>Erby</R><G>, Y., </G><R>Shobe</R><G>, M., Christy, K., Jordan, S., &amp; Hampton-Stover, E.</G></> },
    { h: "h-[25px]", leading: "leading-[26px]", body: <><G>(under review).</G>  Educational Development Accounts: Promoting post-secondary</> },
    { h: "h-[36px]", leading: "leading-[26px]", end: 423, body: <>education among parents of low income families.</> },
  ],
  [
    { h: "h-[24px]", leading: "leading-[24px]", body: <><R>Shobe</R><G>, M., Christy-</G><R>McMullin</R><G>, K., Hamilton, L., Murphy-</G><R>Erby</R><G>, Y. Denny, G. S., &amp; Givens, A.</G></> },
    { h: "h-[26px]", leading: "leading-[26px]", body: <><G>(under review).</G>  Community asset-based strategies: Personal, social, and economic</> },
    { h: "h-[24px]", leading: "leading-[24px]", end: 118, body: <>contributions.</> },
  ],
];

const tails = [64, 323, 736, 646, 434, 128];

function Page() {
  return (
    <div className="ml-[391px] mt-[21px] w-[1103px] h-[945px] bg-[#fefefe] pl-[131px] pt-[130px] shadow-[0_14px_14px_2px_rgba(70,70,85,0.6)] [clip-path:inset(-20px_-20px_0_-20px)] font-['Liberation_Serif','Times_New_Roman',serif] text-[21.6px]">
      <div className="flex justify-center w-[840px] h-6 leading-6 text-black">References</div>
      <div className="mt-[22px] text-[#1c3d66]">
        {paragraphs.map((rows, p) =>
          rows.map((row, i) => {
            const first = i === 0;
            const last = i === rows.length - 1;
            return (
              <div
                key={`${p}-${i}`}
                className={clsx("bg-[#aed0f3]", row.h, row.leading, row.size, !first && "ml-[64px]")}
                style={{ width: last ? tails[p] : first ? 847 : 783 }}
              >
                <Justified w={row.end ?? (first ? 842 : 778)}>{row.body}</Justified>
              </div>
            );
          }),
        )}
      </div>
    </div>
  );
}

function ScrollBar() {
  return (
    <div className="w-[23px] flex flex-col items-center bg-[#e0e3e9]">
      <div className="w-full h-[13px] shrink-0 bg-[#d3d6da] flex justify-center">
        <div className="mt-[6px] w-3 h-[3px] bg-[#85888d]" />
      </div>
      <div className="w-[22px] h-[22px] shrink-0 border border-[#8b8e93] bg-[#dfe1e4] flex items-center justify-center">
        <svg width="17" height="17" viewBox="0 0 17 17" fill="none" stroke="#70737a" strokeWidth="1.200">
          <path d="M3 6v8h12V3H7" />
          <path d="M1 1h5v2.500L3.500 6 1 3.500zM8 16v-3l2.500-2.500L13 13v3z" fill="#fff" />
          <path d="M7 8h1M11 6h1M6 11h1M12 8h1" />
        </svg>
      </div>
      <svg width="12" height="7" viewBox="0 0 12 7" className="mt-[8px] shrink-0">
        <path d="M0 7l6-7 6 7z" fill="#55585e" />
      </svg>
      <div className="mt-2 w-[21px] h-[558px] shrink-0 border border-[#a0a3a9] rounded-[2px] bg-linear-to-r from-[#f6f7f9] to-[#e6e8ed] flex flex-col items-center justify-center gap-[2px]">
        <div className="w-[10px] h-px bg-[#85888d]" />
        <div className="w-[10px] h-px bg-[#85888d]" />
        <div className="w-[10px] h-px bg-[#85888d]" />
      </div>
      <svg width="12" height="7" viewBox="0 0 12 7" className="mt-auto shrink-0">
        <path d="M0 0l6 7 6-7z" fill="#55585e" />
      </svg>
      <div className="mt-[7px] w-full border-t border-[#bfc2c8] h-[70px] shrink-0 flex flex-col items-center justify-between pt-[4px] pb-[7px] bg-[#dcdfe5]">
        <svg width="8" height="10" viewBox="0 0 8 10">
          <path d="M0 4l4-4 4 4zM0 9l4-4 4 4zM0 9h8" fill="#44474d" stroke="#44474d" strokeWidth=".5" />
        </svg>
        <div className="size-[10px] rounded-full border-[1.500px] border-[#74777d] bg-[#c9ccd2]" />
        <svg width="8" height="10" viewBox="0 0 8 10">
          <path d="M0 1l4 4 4-4zM0 6l4 4 4-4zM0 1h8" fill="#44474d" stroke="#44474d" strokeWidth=".5" />
        </svg>
      </div>
    </div>
  );
}

function StatusBar() {
  return (
    <div className="flex items-center h-[31px] pb-[2px] border-t border-[#8f9298] bg-linear-to-b from-[#eceef1] to-[#bfc1c7] text-[#4a4d52]">
      <Fit w={454} className="ml-[13px] leading-[28px] text-[16px]">
        methodresults-draft001: 16,831 characters (an approximate value).
      </Fit>
      <div className="ml-[504px] w-px h-6 bg-[#a2a5ab]" />
      <div className="ml-auto w-px h-6 bg-[#9a9da3]" />
      <div className="ml-[6px] w-[26px] h-[25px] rounded-[3px] border border-[#c99b35] bg-[#fbda66] flex items-center justify-center">
        <svg width="16" height="16" viewBox="0 0 16 16">
          <path d="M.5.500h15v15H.5z" fill="#fdf8df" stroke="#5e5a4b" />
          <path d="M3 4h10M3 7h10M3 10h10M3 13h10" stroke="#5e5a4b" strokeWidth="1.200" />
        </svg>
      </div>
      <svg width="16" height="16" viewBox="0 0 16 16" className="ml-[5px]">
        <path d="M.5 2Q4 0 8 3q4-3 7.500-1v10Q12 11 8 14q-4-3-7.500-2zM8 3v12" fill="#f4f5f7" stroke="#65686d" strokeWidth="1.200" />
        <path d="M2.500 5h3M2.500 8h3M10.500 5h3M10.500 8h3" stroke="#65686d" />
      </svg>
      <svg width="17" height="16" viewBox="0 0 17 16" className="ml-[7px]">
        <path d="M.5 1h13v11H.5z" fill="#f4f5f7" stroke="#65686d" strokeWidth="1.200" />
        <path d="M3 4h8M3 6.500h8M3 9h5" stroke="#65686d" />
        <circle cx="12" cy="11" r="4.200" fill="#2f7f9c" />
        <path d="M10 9q3-1 3 2l-2 2z" fill="#7cc48b" />
      </svg>
      <svg width="14" height="14" viewBox="0 0 14 14" className="ml-[10px]">
        <path d="M0 1h11M3 4h10M5 7h8M5 10h8M1 13h11" stroke="#74777c" strokeWidth="1.400" strokeDasharray="2 1 9" />
      </svg>
      <svg width="14" height="14" viewBox="0 0 14 14" className="ml-[11px]">
        <path d="M0 1h14M0 4h14M0 7h14M0 10h14M0 13h14" stroke="#65686d" strokeWidth="1.500" />
      </svg>
      <Fit w={37} className="ml-[18px] leading-[28px] text-[16px]">100%</Fit>
      <svg width="180" height="24" viewBox="0 0 180 24" className="ml-[9px] mr-[5px]">
        <path d="M22 11.500h137" stroke="#8b8e94" strokeWidth="1.500" />
        <path d="M22 12.800h137" stroke="#f4f5f7" />
        <circle cx="12" cy="12" r="10" fill="#f8f9fa" stroke="#85888e" strokeWidth="1.300" />
        <path d="M7 12h10" stroke="#55585e" strokeWidth="2.200" />
        <path d="M85.500 3h11v10l-5.500 5.500-5.500-5.500z" fill="#fafbfc" stroke="#74777d" strokeWidth="1.300" />
        <circle cx="168.500" cy="12" r="10" fill="#f8f9fa" stroke="#85888e" strokeWidth="1.300" />
        <path d="M163.500 12h10M168.500 7v10" stroke="#55585e" strokeWidth="2.400" />
      </svg>
    </div>
  );
}

export default function App() {
  return (
    <div className="relative w-[2048px] h-[1536px] overflow-hidden bg-[#889ecf] font-['Open_Sans','Noto_Sans',sans-serif] text-[15.5px] text-[#45484d]">
      {/* rounded slide panel behind the window */}
      <div className="absolute left-[64px] top-[225px] w-[1922px] h-[1252px] rounded-[30px] bg-[#d7deef] shadow-[0_0_10px_5px_#4a7da6]" />

      <div className="relative flex flex-col">
        <h1 className="flex ml-[599px] h-[238px] pt-[65px] font-bold text-[100px] leading-[120px] text-black [-webkit-text-stroke:4px_#000] font-['Liberation_Sans',Arial,sans-serif]">
          <Fit w={458}>Hanging</Fit>
          <Fit w={355} className="ml-[34px]">Indent</Fit>
        </h1>

        <div className="ml-[34px] w-[1946px] h-[1212px] flex flex-col">
          <div className="bg-linear-to-b from-[#fbfcfd] to-[#fefefe]">
            <TitleBar />
            <TabRow />
          </div>
          <div className="flex h-[115px] shrink-0 bg-linear-to-b from-[#fefefe] from-50% to-[#eceef1]">
            <Clipboard />
            <FontGroup />
            <Paragraph />
            <StylesGroup />
            <Editing />
          </div>
          <div className="flex h-[1005px] shrink-0 border-t-2 border-[#96999f] bg-linear-to-b from-[#d4d7da] to-[#c0c0c6]">
            <div className="w-[35px] bg-linear-to-b from-[#d4d7da] to-[#cdd1d4]">
              <div className="mt-[3px] ml-[2px] w-[33px] h-[32px] border border-[#8e9297] flex items-center justify-center">
                <div className="w-[20px] h-[20px] border border-[#8e9297] bg-[#fafbfc] flex items-center justify-center">
                  <div className="w-2 h-2 border-l-[3px] border-b-[3px] border-[#4b4e53]" />
                </div>
              </div>
              <div className="mt-[23px] ml-[8px]">
                <VerticalRuler />
              </div>
            </div>
            <div className="flex-1 pt-[5px]">
              <div className="ml-[390px]">
                <HorizontalRuler />
              </div>
              <Page />
            </div>
            <ScrollBar />
          </div>
          <StatusBar />
        </div>

        <div className="ml-[406px] mt-[35px] text-[37.3px] leading-[42px] text-[#4c6399] font-['Liberation_Sans',Arial,sans-serif]">
          <Fit w={1228}>
            Brought to you by the <b>Purdue Online Writing Lab</b> (owl.english.purdue.edu)
          </Fit>
        </div>
      </div>

      {/* black edge at the lower left of the window */}
      <div className="absolute left-[34px] top-[1275px] w-px h-[175px] bg-black" />

      {/* red pointer to the hanging indent marker */}
      <svg width="244" height="76" viewBox="0 0 244 76" className="absolute left-[693px] top-[400px]">
        <path d="M1 38Q3 36 12 33L121 1.500Q124 1 124 3V19h116q3 0 3 3v32q0 3-3 3H124v16q0 2-3 1.500L12 42Q3 40 1 38z" fill="#ee202b" />
      </svg>
    </div>
  );
}
